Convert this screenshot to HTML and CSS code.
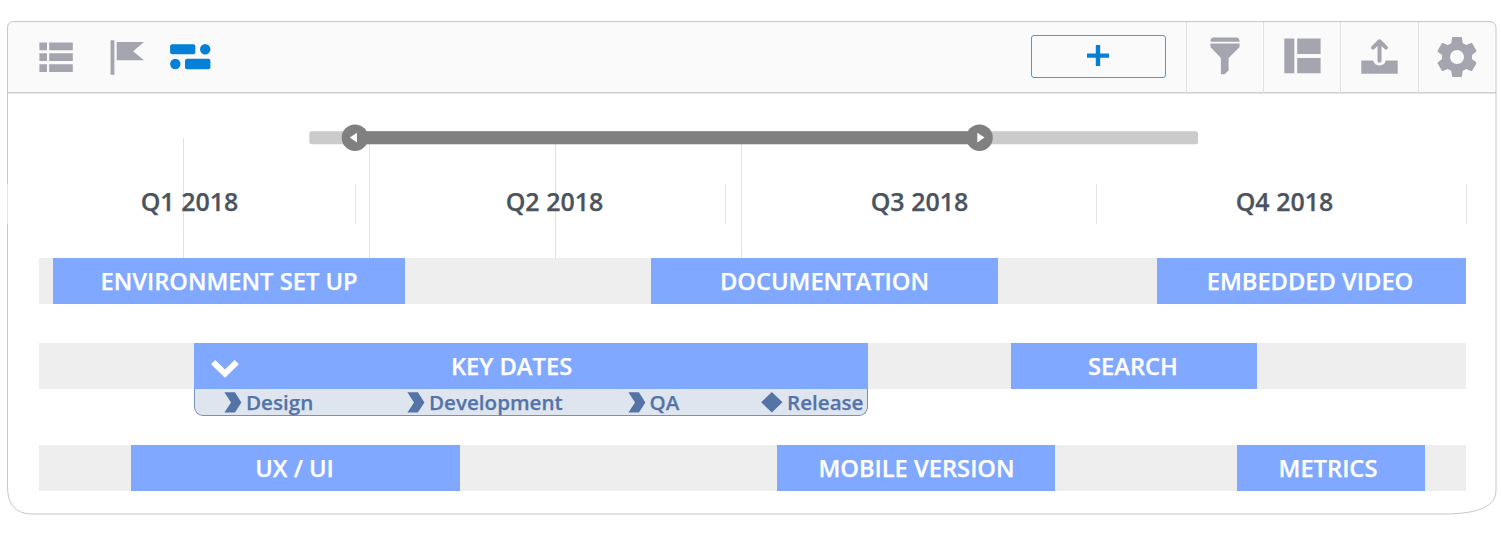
FILE: index.html
```html
<!DOCTYPE html>
<html lang="en">
<head>
<meta charset="utf-8">
<title>Roadmap 2018</title>
<link rel="stylesheet" href="styles.css">
</head>
<body>
<main class="panel">
  <header class="toolbar">
    <nav class="views">
      <svg class="icon" width="34" height="30" viewBox="0 0 34 30"><path d="M.4.500h7.600v7.800H.4zM10.200.500h23.600v7.800H10.200zM.4 11.300h7.600v7.800H.4zM10.200 11.300h23.600v7.800H10.200zM.4 22.200h7.600v7.800H.4zM10.200 22.200h23.600v7.800H10.200z"/></svg>
      <svg class="icon" width="34" height="35" viewBox="0 0 34 35"><path d="M.500.200h3.900v34.600H.500zM6.700 2H34l-10.800 9.200L34 20.200H6.700z"/></svg>
      <svg class="icon active" width="41" height="26" viewBox="0 0 41 26"><rect x=".1" y=".3" width="25.200" height="10" rx="2"/><circle cx="35.200" cy="5.300" r="5.200"/><circle cx="5.300" cy="20" r="5.200"/><rect x="15" y="14.700" width="25.400" height="10.500" rx="2"/></svg>
    </nav>
    <div class="actions">
      <button class="add" aria-label="Add"><svg width="22" height="21" viewBox="0 0 22 21"><path d="M8.800 0h4.400v8.500H22v4.200h-8.800V21H8.800v-8.300H0V8.500h8.800z"/></svg></button>
      <div class="tool"><svg class="icon" width="30" height="38" viewBox="0 0 30 38"><path d="M3.500.5h23Q29.600.8 29.600 4.700H.4Q.4.8 3.500.500zM.4 6.600h29.200v3.400L18.600 21v12.400L14.600 37.300H10.900V21L.4 10z"/></svg></div>
      <div class="tool"><svg class="icon" width="37" height="36" viewBox="0 0 37 36"><path d="M.3.600h10v34.600h-10zM13.200.600h23.400v15.500H13.200zM13.200 20h23.400v15.200H13.200z"/></svg></div>
      <div class="tool"><svg class="icon" width="37" height="36" viewBox="0 0 37 36"><path d="M.3 22.600h11.900a6.500 6.500 0 0 0 12.600 0h11.900v13.200H.3z"/><path class="arrow" d="M18.500 22.800V4M12 9.600l6.500-6.300 6.500 6.300"/></svg></div>
      <div class="tool gear"><svg class="icon" width="40" height="40" viewBox="2 2 20 20"><path d="M19.430 12.980c.04-.32.07-.64.07-.98s-.03-.66-.07-.98l2.110-1.650c.19-.15.24-.42.12-.64l-2-3.460c-.12-.22-.39-.3-.61-.22l-2.490 1c-.52-.4-1.080-.73-1.690-.98l-.38-2.650C14.460 2.180 14.250 2 14 2h-4c-.25 0-.46.18-.49.42l-.38 2.650c-.61.25-1.170.59-1.690.98l-2.490-1c-.23-.09-.49 0-.61.22l-2 3.460c-.13.22-.07.49.12.64l2.110 1.650c-.04.32-.07.65-.07.98s.03.66.07.98l-2.110 1.650c-.19.15-.24.42-.12.64l2 3.460c.12.22.39.3.61.22l2.490-1c.52.4 1.080.73 1.690.98l.38 2.650c.03.24.24.42.49.42h4c.25 0 .46-.18.49-.42l.38-2.650c.61-.25 1.170-.59 1.690-.98l2.490 1c.23.09.49 0 .61-.22l2-3.460c.12-.22.07-.49-.12-.64zM12 15.500a3.500 3.500 0 1 1 0-7 3.500 3.500 0 0 1 0 7z"/></svg></div>
    </div>
  </header>

  <section class="scale">
    <div class="gridlines"><i></i><i></i><i></i><i></i></div>
    <svg class="scrubber" width="890" height="28" viewBox="0 0 890 28">
      <rect class="track" x=".3" y="7.200" width="888.700" height="13" rx="2.500"/>
      <rect class="range" x="46" y="7.200" width="624" height="13"/>
      <circle class="range" cx="46" cy="13.700" r="13.300"/><path class="knob" d="M40.800 13.600l7.200-4.800v9.600z"/>
      <circle class="range" cx="670.500" cy="13.700" r="13.300"/><path class="knob" d="M675.500 13.600l-7.200-4.800v9.600z"/>
    </svg>
    <div class="quarters"><span>Q1 2018</span><span>Q2 2018</span><span>Q3 2018</span><span>Q4 2018</span></div>
    <div class="separators"><i></i><i></i><i></i><i></i></div>
  </section>

  <section class="lanes">
    <div class="lane first">
      <div class="bar environment">ENVIRONMENT SET UP</div>
      <div class="bar documentation">DOCUMENTATION</div>
      <div class="bar video">EMBEDDED VIDEO</div>
    </div>
    <div class="lane second">
      <div class="group">
        <div class="bar dates"><svg width="28" height="19" viewBox="0 0 28 19"><path d="M2.200 3.200L14 14.600 25.800 3.200"/></svg><span>KEY DATES</span></div>
        <div class="phases">
          <span class="phase design"><svg width="18" height="21" viewBox="0 0 18 21"><path d="M.4.200h10.500l6.500 10.200-6.500 10.200H.4L7 10.400z"/></svg>Design</span>
          <span class="phase development"><svg width="18" height="21" viewBox="0 0 18 21"><path d="M.4.200h10.500l6.500 10.200-6.500 10.200H.4L7 10.400z"/></svg>Development</span>
          <span class="phase qa"><svg width="18" height="21" viewBox="0 0 18 21"><path d="M.4.200h10.500l6.500 10.200-6.500 10.200H.4L7 10.400z"/></svg>QA</span>
          <span class="phase release"><svg width="22" height="21" viewBox="0 0 22 21"><path d="M10.800 0l10.700 10.300L10.800 20.600.2 10.300z"/></svg>Release</span>
        </div>
      </div>
      <div class="bar search">SEARCH</div>
    </div>
    <div class="lane third">
      <div class="bar ux">UX / UI</div>
      <div class="bar mobile">MOBILE VERSION</div>
      <div class="bar metrics">METRICS</div>
    </div>
  </section>

  <svg class="outline" width="1490" height="494" viewBox="0 0 1490 494"><path d="M.500 163V7Q.500.600 7 .600H1482Q1489 .600 1489 7V470Q1489 492 1441 493H24Q.500 492 .500 466V203"/><path class="faint" d="M.500 163v40"/></svg>
</main>
</body>
</html>
```
FILE: styles.css
```css
* { box-sizing: border-box; }

body {
  margin: 0;
  background: #fff;
  font-family: "Open Sans", sans-serif;
  font-weight: 600;
}

svg { display: block; flex: none; }

.panel {
  position: relative;
  width: 1490px;
  height: 494px;
  margin: 21px 0 0 7px;
}

.outline {
  position: absolute;
  inset: 0;
  pointer-events: none;
  fill: none;
  stroke: #c8c8c8;
}
.outline .faint { stroke: #e8e8e8; }

/* Toolbar */
.toolbar {
  display: flex;
  justify-content: space-between;
  width: 1489px;
  height: 73px;
  padding-right: 1px;
  background: #fafafa;
  border-bottom: 1px solid #e4e4e4;
  border-radius: 6px 6px 0 0;
  box-shadow: inset 0 -1px #d0d0d0;
}
.icon { fill: #a5a5af; }
.icon.active { fill: #0480d8; }
.views {
  display: flex;
  align-items: center;
  gap: 37px;
  padding-left: 32px;
}
.views .icon:nth-child(2) { margin-right: -11px; }
.actions { display: flex; }
.add {
  display: grid;
  place-items: center;
  width: 135px;
  height: 43px;
  margin: 14px 20px 0 0;
  padding: 0 0 2px;
  border: 1px solid #3c9de0;
  border-radius: 3px;
  background: #fafafa;
}
.add svg { fill: #0480d8; }
.tool {
  display: grid;
  place-items: center;
  width: 77.3px;
  padding-bottom: 2px;
  border-left: 1px solid #e1e1e1;
}
.gear { padding-bottom: 0; }
.arrow {
  fill: none;
  stroke: #a5a5af;
  stroke-width: 4;
  stroke-linecap: round;
  stroke-linejoin: round;
}

/* Time scale */
.scale {
  position: relative;
  height: 164px;
  padding-top: 30px;
}
.gridlines {
  position: absolute;
  top: 44px;
  left: 176px;
  display: flex;
  gap: 185px;
  height: 120px;
}
.gridlines i { width: 1px; background: #e1e1e1; }
.scrubber { position: relative; margin-left: 302px; }
.quarters, .bar, .phases { -webkit-text-stroke: .25px currentColor; }
.track { fill: #cbcbcb; }
.range { fill: #808080; }
.knob { fill: #fff; }
.quarters {
  position: relative;
  display: grid;
  grid-template-columns: repeat(4, 365px);
  margin-top: 29px;
  text-align: center;
  font-size: 25px;
  line-height: 40px;
  color: #4a535e;
}
.separators {
  display: flex;
  justify-content: space-between;
  width: 1112px;
  height: 40px;
  margin: -37px 0 0 348px;
}
.separators i { width: 1px; background: #e4e4ea; }

/* Lanes */
.lanes { padding: 0 31px 0 32px; }
.lane {
  display: flex;
  height: 46px;
  background: #eee;
}
.second { margin-top: 39px; }
.third { margin-top: 56px; }
.bar {
  height: 46px;
  background: #80a8ff;
  color: #fff;
  font-size: 23.7px;
  line-height: 46px;
  text-align: center;
  white-space: nowrap;
}
.environment { width: 352px; margin-left: 14px; }
.documentation { width: 347px; margin-left: 246px; }
.video { width: 309px; margin-left: 159px; padding-right: 3px; }
.group { width: 674px; margin-left: 155px; }
.dates { display: flex; align-items: center; }
.dates svg {
  margin: 4px 0 0 17px;
  fill: none;
  stroke: #fff;
  stroke-width: 6;
}
.dates span { margin-left: 212px; }
.search { width: 246px; margin-left: 143px; padding-right: 2px; }
.ux { width: 329px; margin-left: 92px; padding-right: 2px; }
.mobile { width: 278px; margin-left: 317px; padding-left: 1px; }
.metrics { width: 188px; margin-left: 182px; padding-right: 6px; }

.phases {
  display: flex;
  height: 27px;
  padding-left: 29px;
  background: #dfe5ef;
  border: 1px solid #7690bc;
  border-top: 0;
  border-radius: 0 0 9px 9px;
  color: #5474a8;
  font-size: 20.600px;
  line-height: 26px;
}
.phase { display: flex; align-items: center; gap: 4px; fill: #5474a8; }
.development { width: 220.500px; }
.design { width: 183px; }
.qa { width: 133.500px; }
```
